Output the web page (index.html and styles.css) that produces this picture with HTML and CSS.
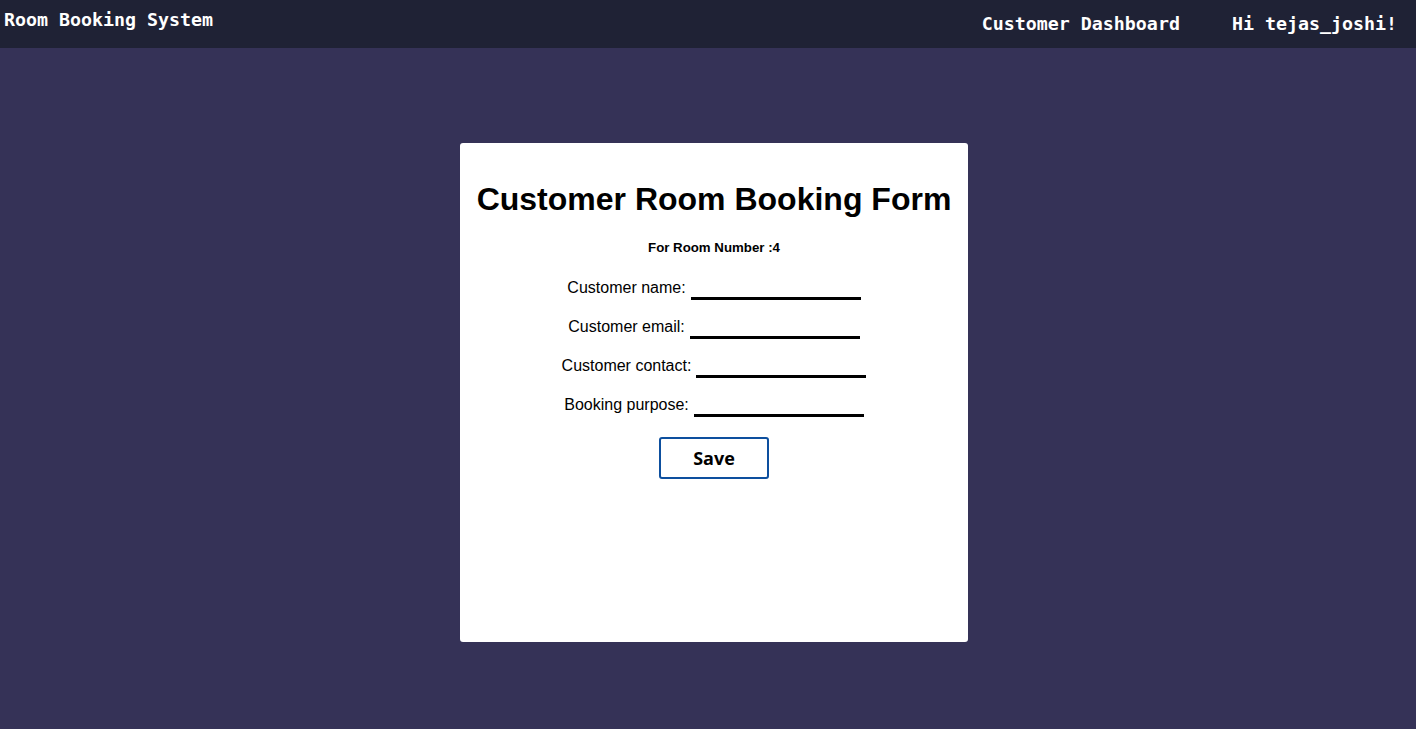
FILE: index.html
```html
<!DOCTYPE html>
<html lang="en">
<head>
<meta charset="utf-8">
<title>Room Booking System</title>
<link rel="stylesheet" href="styles.css">
</head>
<body>
<nav class="navbar">
  <div class="brand">Room Booking System</div>
  <div class="nav-right">
    <span class="nav-link">Customer Dashboard</span>
    <span class="nav-user">Hi tejas_joshi!</span>
  </div>
</nav>
<main class="main">
  <div class="card">
    <h1 class="title">Customer Room Booking Form</h1>
    <h5 class="subtitle">For Room Number :4</h5>
    <form class="form">
      <div class="row"><label class="label">Customer name:</label><input class="field" type="text"></div>
      <div class="row"><label class="label">Customer email:</label><input class="field" type="text"></div>
      <div class="row"><label class="label">Customer contact:</label><input class="field" type="text"></div>
      <div class="row"><label class="label">Booking purpose:</label><input class="field" type="text"></div>
      <div class="actions"><button class="save" type="button">Save</button></div>
    </form>
  </div>
</main>
</body>
</html>
```
FILE: styles.css
```css
html, body {
  margin: 0;
  padding: 0;
}
body {
  background: #353257;
  min-height: 729px;
  font-family: "Liberation Sans", Arial, sans-serif;
}
.navbar {
  height: 48px;
  background: #1f2235;
  display: flex;
  justify-content: space-between;
  color: #ffffff;
  font-family: "DejaVu Sans Mono", "Liberation Mono", monospace;
  font-weight: bold;
  font-size: 18.3px;
}
.brand {
  padding: 9px 0 0 4px;
  line-height: 22px;
}
.nav-right {
  display: flex;
  gap: 52px;
  padding: 13px 19px 0 0;
  line-height: 22px;
}
.main {
  display: flex;
  justify-content: center;
  padding: 95px 0 0 12px;
}
.card {
  width: 508px;
  height: 499px;
  box-sizing: border-box;
  background: #ffffff;
  border-radius: 3px;
  padding-top: 16px;
  text-align: center;
  color: #000;
}
.title {
  font-size: 32px;
  font-weight: bold;
  margin: 22px 0 0;
  line-height: 37px;
}
.subtitle {
  font-size: 13.28px;
  font-weight: bold;
  margin: 22px 0 0;
  line-height: 15px;
}
.form {
  margin-top: 23px;
  display: flex;
  flex-direction: column;
  gap: 17px;
}
.row {
  display: flex;
  justify-content: center;
  align-items: flex-end;
  gap: 5px;
  font-size: 16px;
}
.label {
  line-height: 18px;
  margin-bottom: 3px;
}
.field {
  width: 170px;
  height: 22px;
  box-sizing: border-box;
  border: none;
  border-bottom: 3px solid #000;
  padding: 0;
  outline: none;
  background: transparent;
}
.actions {
  display: flex;
  justify-content: center;
  margin-top: 3px;
}
.save {
  width: 110px;
  height: 42px;
  background: #ffffff;
  border: 2px solid #0d4f9e;
  border-radius: 3px;
  font-family: "Open Sans", "Liberation Sans", sans-serif;
  font-weight: bold;
  font-size: 18px;
  color: #000;
  padding: 0;
}
```
